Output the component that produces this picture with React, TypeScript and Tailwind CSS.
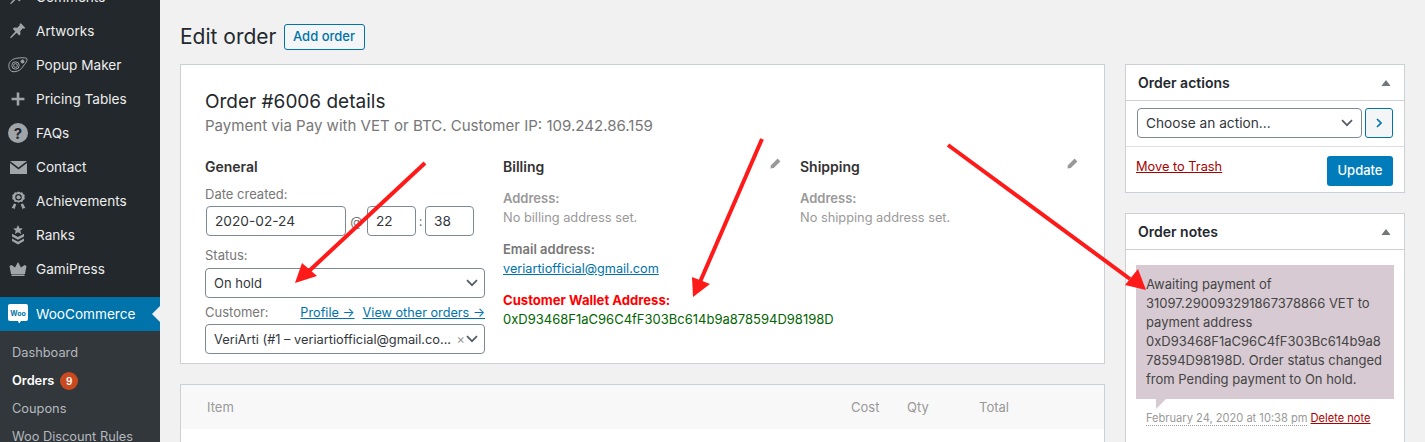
import React from "react";

const FONT = "font-['Inter','Noto_Sans',sans-serif]";

const Chevron = ({ className = "" }: { className?: string }) => (
  <svg width="12" height="8" viewBox="0 0 12 8" fill="none" stroke="#555d66" strokeWidth="1.7" className={className}>
    <path d="M1 1.2l5 5 5-5" />
  </svg>
);

const Caret = () => (
  <svg width="10" height="6" viewBox="0 0 10 6" fill="#72777c">
    <path d="M5 0l4.6 6H.4z" />
  </svg>
);

const Pencil = () => (
  <svg width="11" height="11" viewBox="0 0 11 11" fill="#999">
    <path d="M7.6.6l2.8 2.8-6.6 6.6L.4 10.6 1 7.2z" />
  </svg>
);

const icons: Record<string, React.ReactNode> = {
  pin: (
    <svg width="18" height="18" viewBox="0 0 20 20" fill="#a0a5aa">
      <path d="M13.2 1.4l5 5.200-1.600 1-1.200-.6-3 3.200.4 3.400-1.400 1.400-3-3-5.600 5.400-1.600.6.600-1.600 5.200-5.800-2.800-3L5.800 6l3.400.4 3-3-.6-1.200z" />
    </svg>
  ),
  popup: (
    <svg width="20" height="16" viewBox="0 0 20 16" fill="none" stroke="#a0a5aa" strokeWidth="1">
      <path d="M.8 8.500c0-4 4-6.800 8-7.300 3-.4 7.200-.7 9.700 0 1 .5.500 3.500-1 5-2 2-3 5-6 7-3 1.600-6.200 2-8.200 1-1.600-1-2.500-3.200-2.500-5.700z" />
      <circle cx="7.500" cy="8.500" r="3.700" />
      <circle cx="7.500" cy="8.500" r="1.900" />
      <circle cx="14.500" cy="4.500" r="1.500" fill="#a0a5aa" />
    </svg>
  ),
  plus: (
    <svg width="14" height="14" viewBox="0 0 14 14" fill="#a0a5aa">
      <path d="M5.700.6h2.600v5.100h5.100v2.600H8.300v5.100H5.700V8.300H.6V5.700h5.100z" />
    </svg>
  ),
  faq: (
    <svg width="20" height="20" viewBox="0 0 20 20">
      <circle cx="10" cy="10" r="10" fill="#a0a5aa" />
      <text x="10" y="15.500" textAnchor="middle" fontSize="15" fontWeight="700" fontFamily="Inter, sans-serif" fill="#23282d">?</text>
    </svg>
  ),
  mail: (
    <svg width="17" height="13" viewBox="0 0 17 13" fill="#a0a5aa">
      <path d="M0 0h17L8.500 6.600z" />
      <path d="M0 2l8.500 6.600L17 2v11H0z" />
    </svg>
  ),
  award: (
    <svg width="15" height="20" viewBox="0 0 15 20" fill="#a0a5aa">
      <path d="M7.500.5l1.800 1 2-.2.800 1.800 1.700 1-.4 2 .4 2-1.700 1-.8 1.800-2-.2-1.800 1-1.800-1-2 .2-.8-1.800-1.700-1 .4-2-.4-2 1.700-1 .8-1.800 2 .2zM7.500 3a3.300 3.300 0 100 6.600 3.300 3.300 0 000-6.600z" fillRule="evenodd" />
      <circle cx="7.500" cy="6.300" r="2" />
      <path d="M3 12.500l2.300.8-2 5.200-1-1.500-1.800.3zM12 12.500l-2.300.8 2 5.200 1-1.500 1.800.3z" />
    </svg>
  ),
  ranks: (
    <svg width="12" height="20" viewBox="0 0 12 20" fill="#a0a5aa">
      <path d="M6 0l1.500 3.200 3.300.3-2.500 2.200.8 3.300L6 7.300 2.900 9l.8-3.300L1.200 3.500l3.300-.3z" />
      <path d="M0 8.800l6 3.300 6-3.300v2.600l-6 3.300-6-3.300zM0 13.400l6 3.300 6-3.300V16l-6 3.600L0 16z" />
    </svg>
  ),
  crown: (
    <svg width="18" height="14" viewBox="0 0 18 14" fill="#a0a5aa">
      <path d="M9 0l3 5.500L15.500 3 17.500 4l-1.500 8H2L.5 4l2-1L6 5.500zM2.500 12.600h13V14h-13z" />
    </svg>
  ),
};

const menu = [
  { label: "Comments", icon: "pin" },
  { label: "Artworks", icon: "pin" },
  { label: "Popup Maker", icon: "popup" },
  { label: "Pricing Tables", icon: "plus" },
  { label: "FAQs", icon: "faq" },
  { label: "Contact", icon: "mail" },
  { label: "Achievements", icon: "award" },
  { label: "Ranks", icon: "ranks" },
  { label: "GamiPress", icon: "crown" },
];

const Sidebar = () => (
  <aside className="w-[160px] shrink-0 bg-[#23282d] text-[13.6px] -mt-[20px]">
    {menu.map((m) => (
      <div key={m.label} className="flex h-[34px] items-center text-[#eeeeee]">
        <span className="flex w-[36px] justify-center">{icons[m.icon]}</span>
        <span>{m.label}</span>
      </div>
    ))}
    <div className="mt-[11px] relative flex h-[34px] items-center bg-[#0073aa] text-white">
      <span className="flex w-[36px] justify-center">
        <svg width="20" height="20" viewBox="0 0 20 20">
          <path d="M2 0h16a2 2 0 012 2v13a2 2 0 01-2 2h-5l-2 2.500L10 17H2a2 2 0 01-2-2V2a2 2 0 012-2z" fill="#fff" />
          <text x="10" y="11.500" textAnchor="middle" fontSize="7" fontWeight="700" fontFamily="Inter, sans-serif" fill="#0073aa">Woo</text>
        </svg>
      </span>
      <span>WooCommerce</span>
      <span className="absolute right-0 top-[9px] h-0 w-0 border-y-[8px] border-r-[8px] border-y-transparent border-r-[#f1f1f1]" />
    </div>
    <div className="h-[200px] bg-[#32373c] pt-[8px] text-[12.8px] text-[#b4b9be]">
      <div className="flex h-[28px] items-center pl-[12px]">Dashboard</div>
      <div className="flex h-[28px] items-center pl-[12px] font-semibold text-white">
        Orders
        <span className="ml-[6px] flex h-[18px] w-[18px] items-center justify-center rounded-full bg-[#ca4a1f] text-[10px] font-semibold">9</span>
      </div>
      <div className="flex h-[28px] items-center pl-[12px]">Coupons</div>
      <div className="flex h-[28px] items-center pl-[12px]">Woo Discount Rules</div>
    </div>
  </aside>
);

const Select = ({ children, className = "" }: { children: React.ReactNode; className?: string }) => (
  <div className={`flex h-[30px] items-center rounded-[4px] border border-[#7e8993] bg-white pl-[8px] pr-[6px] text-[#32373c] ${className}`}>
    {children}
  </div>
);

const Input = ({ children, className = "" }: { children: React.ReactNode; className?: string }) => (
  <div className={`flex h-[30px] items-center rounded-[4px] border border-[#7e8993] bg-white px-[8px] text-[13.7px] text-[#32373c] ${className}`}>
    {children}
  </div>
);

const OrderDetails = () => (
  <section className="h-[300px] border border-[#ccd0d4] bg-white px-[24px] pt-[24px]">
    <h2 className="text-[19px] leading-[26px] text-[#23282d]">Order #6006 details</h2>
    <p className="mt-[1px] text-[15.05px] leading-[20px] text-[#777]">Payment via Pay with VET or BTC. Customer IP: 109.242.86.159</p>
    <div className="mt-[21px] grid grid-cols-[280px_279px_280px] gap-x-[18px] text-[13px] leading-[19px]">
      <div>
        <h3 className="text-[14px] font-semibold leading-[20px] text-[#333]">General</h3>
        <div className="mt-[8px] text-[#777]">Date created:</div>
        <div className="mt-[2px] flex items-center pl-[1px] text-[#777]">
          <Input className="w-[140px]">2020-02-24</Input>
          <span className="w-[21px] text-center">@</span>
          <Input className="w-[49px]">22</Input>
          <span className="w-[9px] text-center">:</span>
          <Input className="w-[49px]">38</Input>
        </div>
        <div className="mt-[10px] text-[#777]">Status:</div>
        <Select className="mt-[3px] justify-between text-[13px]">
          On hold
          <Chevron />
        </Select>
        <div className="mt-[5px] flex justify-between text-[#777]">
          Customer:
          <span className="text-[12.7px] text-[#0073aa] underline">
            Profile →<span className="ml-[8px]">View other orders →</span>
          </span>
        </div>
        <Select className="mt-[2px] justify-between text-[12.8px]">
          <span className="whitespace-nowrap">VeriArti (#1 – veriartiofficial@gmail.co...</span>
          <span className="flex items-center gap-[1px]">
            <span className="text-[#999]">×</span>
            <Chevron />
          </span>
        </Select>
      </div>
      <div>
        <div className="flex items-start justify-between">
          <h3 className="text-[14px] font-semibold leading-[20px] text-[#333]">Billing</h3>
          <span className="mt-[1px] mr-[1px]"><Pencil /></span>
        </div>
        <div className="mt-[12px] font-semibold text-[#999]">Address:</div>
        <div className="text-[12.8px] text-[#999]">No billing address set.</div>
        <div className="mt-[13px] font-semibold text-[#777]">Email address:</div>
        <div className="text-[12.7px] text-[#0073aa] underline">veriartiofficial@gmail.com</div>
        <div className="mt-[13px] text-[13.1px] font-bold text-[#ff0000]">Customer Wallet Address:</div>
        <div className="text-[#006400]">0xD93468F1aC96C4fF303Bc614b9a878594D98198D</div>
      </div>
      <div>
        <div className="flex items-start justify-between">
          <h3 className="text-[14px] font-semibold leading-[20px] text-[#333]">Shipping</h3>
          <span className="mt-[1px] mr-[2px]"><Pencil /></span>
        </div>
        <div className="mt-[12px] font-semibold text-[#999]">Address:</div>
        <div className="text-[12.8px] text-[#999]">No shipping address set.</div>
      </div>
    </div>
  </section>
);

const ItemsPanel = () => (
  <section className="mt-[20px] h-[100px] border border-[#ccd0d4] bg-white">
    <div className="flex h-[44px] items-center bg-[#f8f8f8] pl-[26px] pt-[2px] text-[13px] text-[#999]">
      <span className="flex-1">Item</span>
      <span className="w-[56px]">Cost</span>
      <span className="w-[72px]">Qty</span>
      <span className="w-[125px]">Total</span>
    </div>
  </section>
);

const Sidebox = ({ title, children }: { title: string; children: React.ReactNode }) => (
  <section className="border border-[#ccd0d4] bg-white">
    <div className="flex h-[36px] items-center justify-between border-b border-[#ccd0d4] pl-[12px] pr-[13px]">
      <h3 className="text-[14px] font-semibold text-[#23282d]">{title}</h3>
      <Caret />
    </div>
    {children}
  </section>
);

const RightColumn = () => (
  <div className="w-[280px] shrink-0">
    <Sidebox title="Order actions">
      <div className="flex gap-[3px] border-b border-[#dfdfdf] px-[11px] pb-[8px] pt-[7px]">
        <Select className="flex-1 justify-between pr-[8px] text-[13.7px]">
          Choose an action...
          <Chevron />
        </Select>
        <div className="flex h-[30px] w-[28px] items-center justify-center rounded-[3px] border border-[#0073aa] bg-[#f3f5f6]">
          <svg width="6" height="10" viewBox="0 0 6 10" fill="none" stroke="#0073aa" strokeWidth="1.6">
            <path d="M1 1l4 4-4 4" />
          </svg>
        </div>
      </div>
      <div className="flex h-[45px] items-start justify-between pl-[10px] pr-[11px] pt-[9px]">
        <span className="mt-[1px] text-[12.8px] text-[#a00] underline">Move to Trash</span>
        <span className="flex h-[30px] w-[66px] items-center justify-center rounded-[3px] bg-[#007cba] text-[13px] font-medium text-white">Update</span>
      </div>
    </Sidebox>
    <div className="mt-[20px]">
      <Sidebox title="Order notes">
        <div className="h-[200px] px-[10px] pt-[15px]">
          <div className="relative bg-[#d7cad2] py-[10px] pl-[10px] pr-[6px] text-[13px] leading-[19px] text-[#444]">
            Awaiting payment of
            <br />
            31097.290093291867378866 VET to
            <br />
            payment address
            <br />
            0xD93468F1aC96C4fF303Bc614b9a8
            <br />
            78594D98198D. Order status changed
            <br />
            from Pending payment to On hold.
            <span className="absolute left-[20px] top-full h-0 w-0 border-r-[10px] border-t-[10px] border-r-transparent border-t-[#d7cad2]" />
          </div>
          <div className="mt-[11px] pl-[10px] text-[11.1px] leading-[16px]">
            <span className="border-b border-dotted border-[#999] text-[#999]">February 24, 2020 at 10:38 pm</span>{" "}
            <span className="text-[#a00] underline">Delete note</span>
          </div>
        </div>
      </Sidebox>
    </div>
  </div>
);

const Arrows = () => (
  <svg className="pointer-events-none absolute inset-0" width="1425" height="442" viewBox="0 0 1425 442">
    <g stroke="#ff1a1a" strokeWidth="4" fill="#ff1a1a">
      <path d="M425 163L308 272" />
      <path d="M295 283l7-20 15 13z" stroke="none" />
      <path d="M762 139L700 282" />
      <path d="M693 297l-1-20 18 7z" stroke="none" />
      <path d="M948 145L1130 279" />
      <path d="M1146 290l-21-5 13-16z" stroke="none" />
    </g>
  </svg>
);

export default function App() {
  return (
    <div className={`relative flex h-[442px] w-[1425px] overflow-hidden bg-[#f1f1f1] ${FONT}`}>
      <Sidebar />
      <main className="flex-1 pl-[20px] pt-[24px]">
        <div className="flex h-[25px] items-center">
          <h1 className="text-[21px] text-[#23282d]">Edit order</h1>
          <span className="ml-[7px] flex h-[26px] w-[81px] items-center justify-center rounded-[3px] border border-[#0073aa] bg-[#f3f5f6] text-[13px] font-medium text-[#0073aa]">Add order</span>
        </div>
        <div className="mt-[15px] flex gap-[20px]">
          <div className="w-[925px] shrink-0">
            <OrderDetails />
            <ItemsPanel />
          </div>
          <RightColumn />
        </div>
      </main>
      <Arrows />
    </div>
  );
}
